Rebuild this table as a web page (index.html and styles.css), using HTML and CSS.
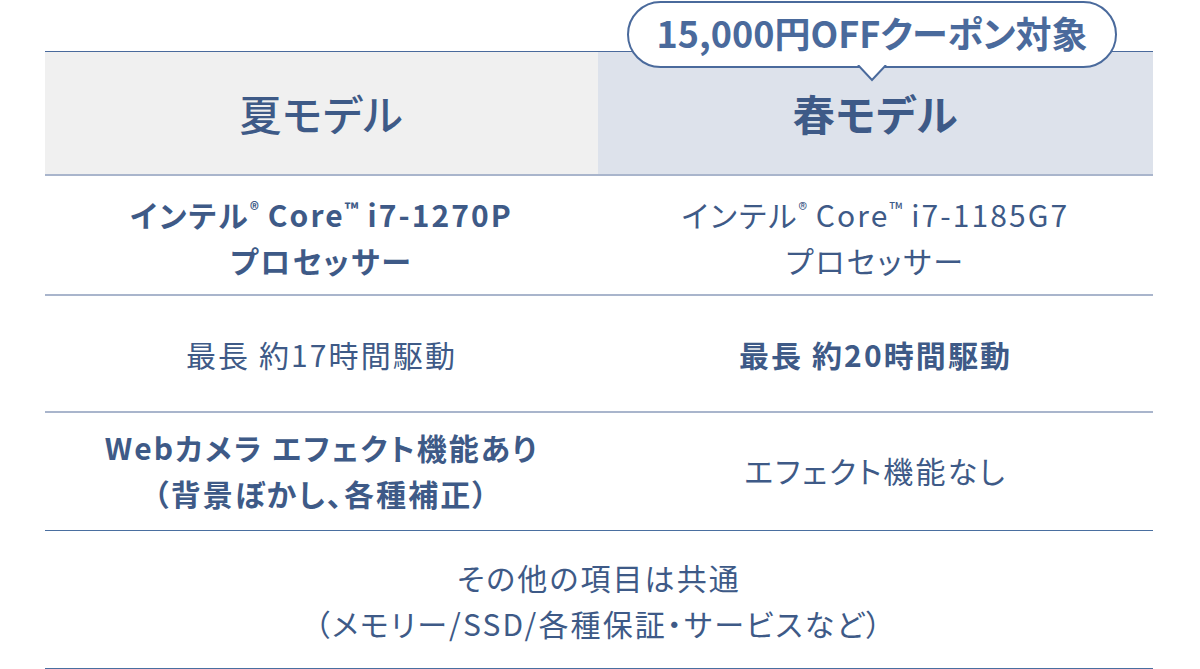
FILE: index.html
```html
<!DOCTYPE html>
<html lang="ja">
<head>
<meta charset="utf-8">
<link rel="stylesheet" href="styles.css">
</head>
<body>
<div class="compare">
  <div class="row head">
    <div class="cell summer"><div class="txt">夏モデル</div></div>
    <div class="cell spring">
      <div class="bubble">
        <span>15,000円OFFクーポン対象</span>
        <svg class="tail" width="30" height="17" viewBox="0 0 30 17"><path d="M1 0 L15 15 L29 0" fill="#fff" stroke="#4a6a9c" stroke-width="2"/></svg>
      </div>
      <div class="txt">春モデル</div>
    </div>
  </div>
  <div class="row r1 light">
    <div class="cell bold"><div class="txt">インテル<sup>®</sup> Core<sup>™</sup> i7-1270P<br>プロセッサー</div></div>
    <div class="cell"><div class="txt">インテル<sup>®</sup> Core<sup>™</sup> i7-1185G7<br>プロセッサー</div></div>
  </div>
  <div class="row r2 light">
    <div class="cell"><div class="txt">最長 約17時間駆動</div></div>
    <div class="cell bold"><div class="txt">最長 約20時間駆動</div></div>
  </div>
  <div class="row r3 dark">
    <div class="cell bold"><div class="txt">Webカメラ エフェクト機能あり<br>（背景ぼかし、各種補正）</div></div>
    <div class="cell"><div class="txt">エフェクト機能なし</div></div>
  </div>
  <div class="row r4 dark full">
    <div class="cell"><div class="txt">その他の項目は共通<br>（メモリー/SSD/各種保証・サービスなど）</div></div>
  </div>
</div>
</body>
</html>
```
FILE: styles.css
```css
html, body {
  margin: 0;
  padding: 0;
  background: #fff;
}
body {
  font-family: "Noto Sans CJK JP", "Noto Sans", sans-serif;
  color: #3e5a87;
  font-feature-settings: "palt";
}
.compare {
  width: 1108px;
  margin-left: 45px;
  padding-top: 51px;
}
.row {
  display: grid;
  grid-template-columns: 553px 555px;
}
.row.full {
  grid-template-columns: 1fr;
}
.cell {
  display: flex;
  align-items: center;
  justify-content: center;
  text-align: center;
  font-size: 30px;
  line-height: 46px;
  font-weight: 400;
  letter-spacing: 0.07em;
}
.cell.bold {
  font-weight: 700;
}
sup {
  font-size: 18px;
  line-height: 0;
  vertical-align: 11px;
  letter-spacing: 0;
}
.head {
  border-top: 1px solid #4a6a9c;
  border-bottom: 2px solid #a9b5cc;
  height: 122px;
}
.head .cell {
  font-size: 42px;
  line-height: 1;
  letter-spacing: 0.02em;
}
.summer {
  background: #f0f0f0;
  font-weight: 500;
}
.spring {
  background: #dde2eb;
  font-weight: 700;
  position: relative;
}
.bubble {
  position: absolute;
  left: 29px;
  top: -51px;
  width: 486px;
  height: 63px;
  border: 2px solid #4a6a9c;
  border-radius: 34px;
  background: #fff;
  display: flex;
  align-items: center;
  justify-content: center;
  font-size: 36px;
  font-weight: 700;
  line-height: 1;
  color: #4a6a9c;
  letter-spacing: 0;
}
.bubble span {
  position: relative;
  top: -3px;
}
.tail {
  position: absolute;
  left: 228px;
  bottom: -16px;
  display: block;
}
.r1 { height: 118px; }
.r1 .txt { position: relative; top: 2px; }
.r2 { height: 115px; }
.r3 { height: 117px; }
.r3 .txt { position: relative; top: -2px; }
.r4 { height: 137px; }
.light {
  border-bottom: 2px solid #a9b5cc;
}
.dark {
  border-bottom: 1px solid #4a6fa0;
}
```
